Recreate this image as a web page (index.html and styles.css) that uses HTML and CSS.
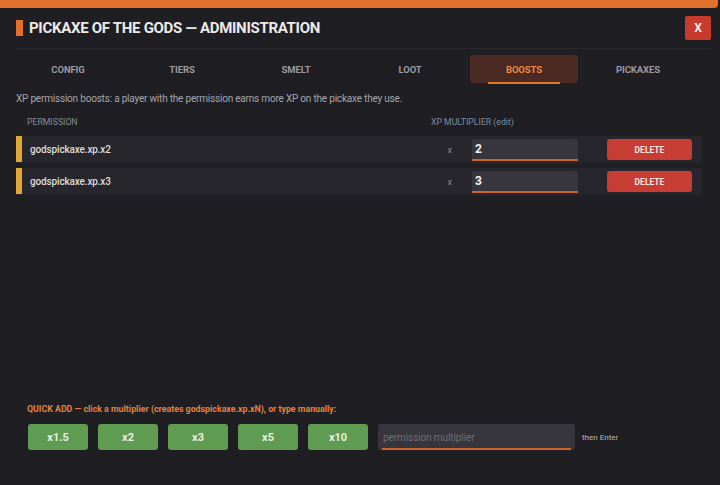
FILE: index.html
```html
<!DOCTYPE html>
<html lang="en">
<head>
    <meta charset="UTF-8">
    <meta name="viewport" content="width=device-width, initial-scale=1.0">
    <title>Pickaxe of the Gods - Administration</title>
    <link rel="stylesheet" href="styles.css">
</head>
<body>

    <div class="panel">
        <div class="topbar"></div>

        <div class="header">
            <h1><span class="marker"></span>PICKAXE OF THE GODS — ADMINISTRATION</h1>
            <button class="close-btn">X</button>
        </div>

        <nav class="tabs">
            <div class="tab">CONFIG</div>
            <div class="tab">TIERS</div>
            <div class="tab">SMELT</div>
            <div class="tab">LOOT</div>
            <div class="tab active">BOOSTS</div>
            <div class="tab">PICKAXES</div>
        </nav>

        <p class="desc">XP permission boosts: a player with the permission earns more XP on the pickaxe they use.</p>

        <div class="list-head">
            <span class="col-perm">PERMISSION</span>
            <span class="col-mult">XP MULTIPLIER (edit)</span>
        </div>

        <div id="boostList">
            <!-- filas generadas -->
        </div>

        <div class="quick">
            <div class="quick-label">QUICK ADD — click a multiplier (creates godspickaxe.xp.xN), or type manually:</div>
            <div class="quick-row">
                <button class="add-btn">x1.5</button>
                <button class="add-btn">x2</button>
                <button class="add-btn">x3</button>
                <button class="add-btn">x5</button>
                <button class="add-btn">x10</button>
                <input type="text" class="manual" placeholder="permission multiplier">
                <span class="hint">then Enter</span>
            </div>
        </div>
    </div>

    <script>
        const boosts = [
            { perm: 'godspickaxe.xp.x2', mult: '2' },
            { perm: 'godspickaxe.xp.x3', mult: '3' }
        ];

        function renderBoosts() {
            const list = document.getElementById('boostList');
            list.innerHTML = '';
            boosts.forEach(b => {
                const row = document.createElement('div');
                row.className = 'boost-row';
                row.innerHTML = `
                    <span class="accent"></span>
                    <span class="perm">${b.perm}</span>
                    <span class="times">x</span>
                    <input type="text" class="mult" value="${b.mult}">
                    <button class="delete-btn">DELETE</button>
                `;
                list.appendChild(row);
            });
        }

        renderBoosts();
    </script>

</body>
</html>
```

FILE: styles.css
```css
* {
    box-sizing: border-box;
}

body {
    margin: 0;
    background-color: #1c1b20;
    font-family: Roboto, "Liberation Sans", sans-serif;
    color: #ddd;
}

.panel {
    height: 485px;
    display: flex;
    flex-direction: column;
    background-color: #1f1e23;
}

.topbar {
    height: 8px;
    width: 718px;
    background-color: #e0702c;
    border-radius: 0 0 4px 0;
}

.header {
    display: flex;
    align-items: center;
    justify-content: space-between;
    margin: 8px 9px 0 16px;
    padding-bottom: 8px;
    border-bottom: 1px solid #2a292f;
}

h1 {
    display: flex;
    align-items: center;
    margin: 0;
    font-size: 15px;
    font-weight: 700;
    color: #ecebe6;
    letter-spacing: -0.3px;
}

.marker {
    width: 7px;
    height: 16px;
    background-color: #e0702c;
    margin-right: 6px;
}

.close-btn {
    width: 26px;
    height: 24px;
    border: none;
    background-color: #c8392e;
    color: #f4ece6;
    font-family: inherit;
    font-weight: 700;
    font-size: 12px;
    padding: 0;
    border-radius: 2px;
}

.tabs {
    display: flex;
    gap: 6px;
    margin: 6px 0 0 14px;
}

.tab {
    position: relative;
    width: 108px;
    height: 28px;
    display: flex;
    align-items: center;
    justify-content: center;
    font-size: 9.5px;
    font-weight: 700;
    letter-spacing: -0.1px;
    color: #9c9ba2;
    border-radius: 3px;
}

.tab.active {
    background-color: #4a2a23;
    color: #ec8a44;
}

.tab.active::after {
    content: "";
    position: absolute;
    left: 18px;
    right: 18px;
    bottom: -1px;
    height: 2px;
    background-color: #e8782e;
}

.desc {
    margin: 9px 0 0 16px;
    font-size: 10px;
    line-height: 14px;
    letter-spacing: -0.2px;
    color: #a6a5ab;
}

.list-head {
    display: flex;
    margin: 10px 18px 0 16px;
    height: 12px;
    line-height: 12px;
    font-size: 8.7px;
    color: #7d8fa0;
}

.col-perm {
    flex: 1;
    padding-left: 11px;
}

.col-mult {
    width: 271px;
}

#boostList {
    display: flex;
    flex-direction: column;
    gap: 5px;
    margin: 8px 18px 0 16px;
}

.boost-row {
    display: flex;
    align-items: center;
    height: 27px;
    background-color: #27262c;
    padding-right: 10px;
}

.accent {
    align-self: stretch;
    width: 6px;
    margin: 0 8px 1px 0;
    background-color: #e0a83a;
}

.perm {
    flex: 1;
    font-size: 10px;
    font-weight: 500;
    letter-spacing: -0.15px;
    color: #dcdcdc;
}

.times {
    font-size: 9px;
    color: #8a8990;
    margin-right: 20px;
}

.mult {
    width: 106px;
    height: 22px;
    border: none;
    border-bottom: 2px solid #d0622c;
    border-radius: 3px 3px 0 0;
    background-color: #37363c;
    color: #f2f2f2;
    font-family: inherit;
    font-size: 12px;
    font-weight: 700;
    padding: 0 3px;
    outline: none;
}

.delete-btn {
    margin-left: 29px;
    width: 85px;
    height: 21px;
    border: none;
    border-radius: 3px;
    background-color: #c73c33;
    color: #f3e6e2;
    font-family: inherit;
    font-size: 8.5px;
    font-weight: 700;
    cursor: pointer;
}

.quick {
    margin-top: auto;
    padding: 0 0 35px 27px;
}

.quick-label {
    font-size: 8.8px;
    font-weight: 700;
    color: #e2823c;
    line-height: 12px;
}

.quick-row {
    display: flex;
    align-items: center;
    gap: 10px;
    margin: 9px 0 0 1px;
}

.add-btn {
    width: 60px;
    height: 26px;
    border: none;
    border-radius: 3px;
    background-color: #5f9c52;
    color: #e6efe0;
    font-family: inherit;
    font-size: 11px;
    font-weight: 700;
    cursor: pointer;
}

.manual {
    width: 197px;
    height: 26px;
    border: none;
    border-radius: 3px;
    background: linear-gradient(#d0622c, #d0622c) no-repeat 4px 24px / 189px 2px, #37363c;
    color: #ddd;
    font-family: inherit;
    font-size: 10px;
    letter-spacing: -0.1px;
    padding: 0 5px;
    outline: none;
}

.manual::placeholder {
    color: #6f6e75;
}

.hint {
    margin-left: -3px;
    font-size: 8px;
    color: #b8b7bc;
}
```
